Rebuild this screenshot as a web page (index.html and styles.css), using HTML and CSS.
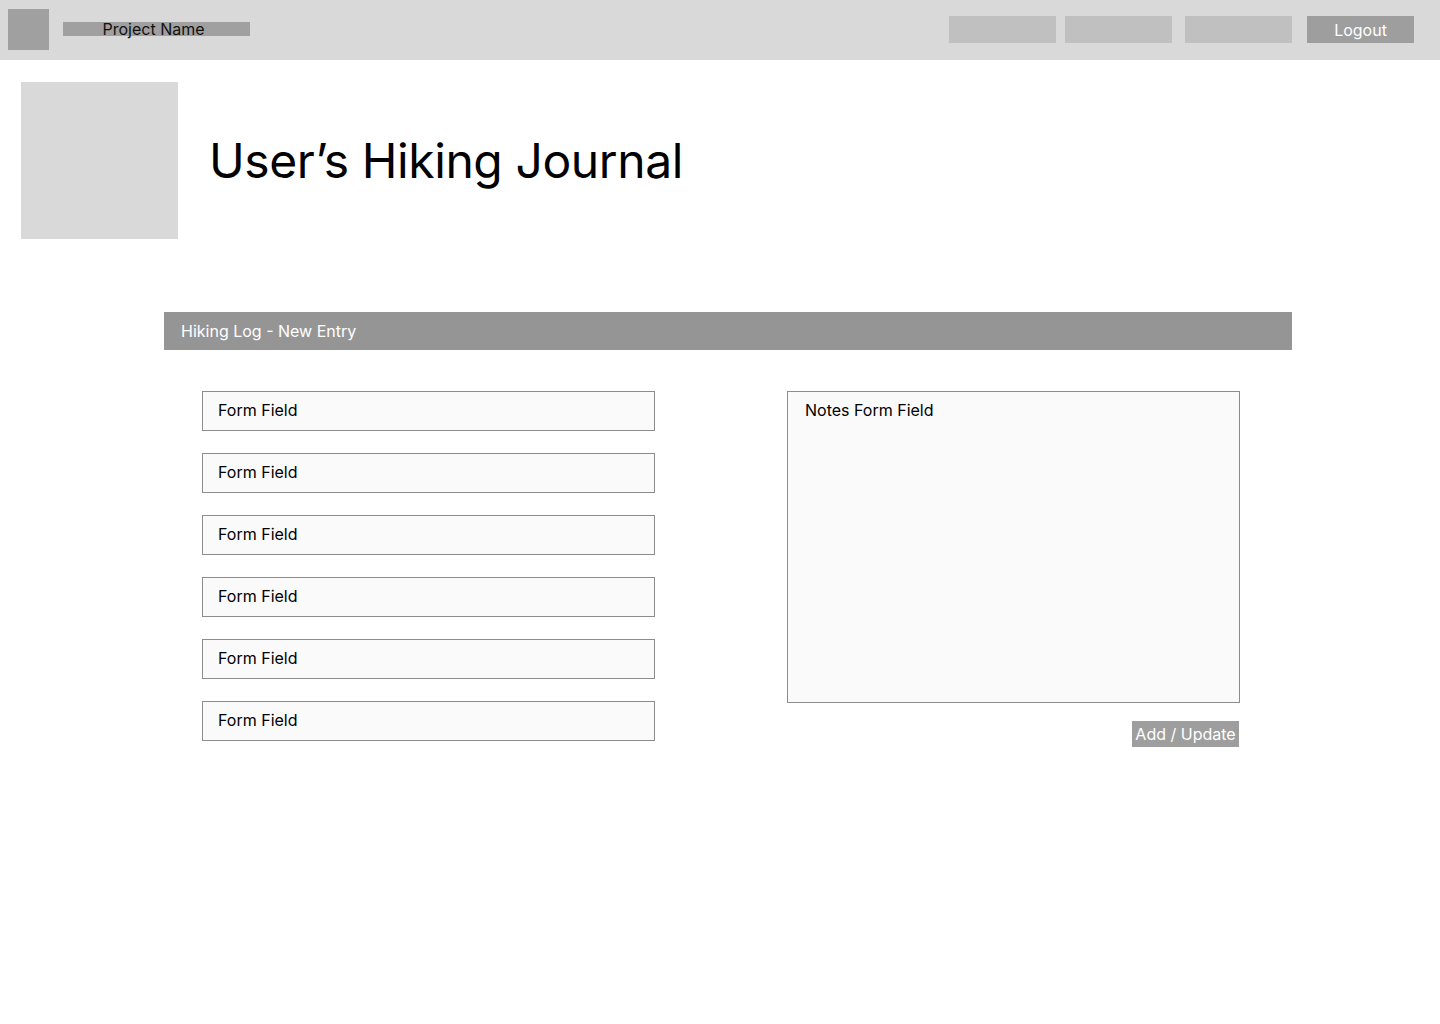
FILE: index.html
```html
<!DOCTYPE html>
<html lang="en">
<head>
<meta charset="utf-8">
<title>User's Hiking Journal</title>
<link rel="stylesheet" href="styles.css">
</head>
<body>
<header class="topbar">
  <div class="logo"></div>
  <div class="project-name">Project Name</div>
  <nav class="nav">
    <span class="nav-item"></span>
    <span class="nav-item nav-item-2"></span>
    <span class="nav-item nav-item-3"></span>
    <span class="nav-item nav-logout">Logout</span>
  </nav>
</header>

<section class="hero">
  <div class="avatar"></div>
  <h1 class="title">User’s Hiking Journal</h1>
</section>

<section class="log">
  <div class="log-header">Hiking Log - New Entry</div>
  <div class="log-body">
    <div class="fields">
      <div class="field">Form Field</div>
      <div class="field">Form Field</div>
      <div class="field">Form Field</div>
      <div class="field">Form Field</div>
      <div class="field">Form Field</div>
      <div class="field">Form Field</div>
    </div>
    <div class="notes-col">
      <div class="notes">Notes Form Field</div>
      <div class="btn-row"><span class="btn">Add / Update</span></div>
    </div>
  </div>
</section>
</body>
</html>
```

FILE: styles.css
```css
* { box-sizing: border-box; }
html, body { margin: 0; padding: 0; background: #ffffff; }
body {
  font-family: Inter, "Noto Sans", "Liberation Sans", sans-serif;
  color: #000;
  font-size: 16px;
}

.topbar {
  height: 60px;
  background: #d9d9d9;
  display: flex;
  align-items: flex-start;
  padding: 0 26px 0 8px;
}
.logo {
  width: 41px;
  height: 41px;
  background: #a0a0a0;
  margin-top: 9px;
}
.project-name {
  margin: 22px 0 0 14px;
  width: 187px;
  height: 14px;
  background: #a0a0a0;
  line-height: 14px;
  text-align: center;
  padding-right: 6px;
  font-size: 16px;
  color: #111;
}
.nav {
  margin: 16px 0 0 auto;
  display: flex;
  align-items: flex-start;
}
.nav-item {
  width: 107px;
  height: 27px;
  background: #c0c0c0;
  display: flex;
  align-items: center;
  justify-content: center;
}
.nav-item-2 { margin-left: 9px; }
.nav-item-3 { margin-left: 13px; }
.nav-logout {
  margin-left: 15px;
  background: #9e9e9e;
  color: #fff;
  font-size: 16px;
}

.hero {
  display: flex;
  align-items: center;
  margin-top: 22px;
  padding-left: 21px;
}
.avatar {
  width: 157px;
  height: 157px;
  background: #d9d9d9;
  flex: none;
}
.title {
  margin: 0 0 0 31px;
  font-weight: 400;
  font-size: 48px;
  letter-spacing: -0.4px;
  line-height: 1;
}

.log {
  width: 1128px;
  margin: 73px 0 0 164px;
}
.log-header {
  height: 38px;
  background: #959595;
  color: #fff;
  font-size: 16px;
  line-height: 38px;
  padding-left: 17px;
}
.log-body {
  display: flex;
  padding: 41px 0 0 38px;
  gap: 132px;
}
.fields {
  width: 453px;
  display: flex;
  flex-direction: column;
  gap: 22px;
}
.field {
  height: 40px;
  border: 1px solid #8c8c8c;
  background: #fafafa;
  padding-left: 15px;
  line-height: 36px;
  font-size: 16px;
}
.notes-col {
  width: 453px;
  display: flex;
  flex-direction: column;
}
.notes {
  height: 312px;
  border: 1px solid #8c8c8c;
  background: #fafafa;
  padding: 8px 0 0 17px;
  line-height: 20px;
  font-size: 16px;
}
.btn-row {
  display: flex;
  justify-content: flex-end;
  margin-top: 18px;
  padding-right: 1px;
}
.btn {
  width: 107px;
  height: 26px;
  background: #9e9e9e;
  color: #fff;
  font-size: 16px;
  line-height: 26px;
  text-align: center;
}
```
